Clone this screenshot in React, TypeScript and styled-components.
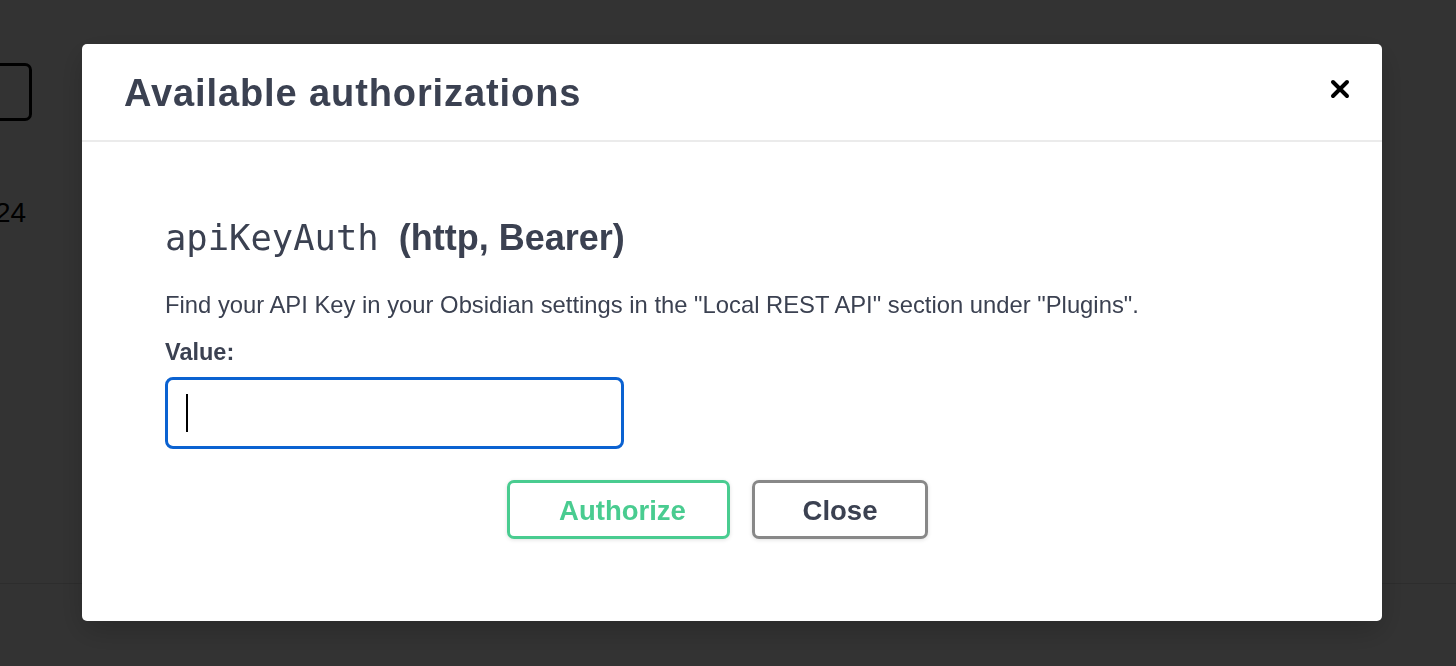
import styled, { createGlobalStyle } from "styled-components";

const GlobalStyle = createGlobalStyle`
  html, body {
    margin: 0;
    padding: 0;
    background: #ffffff;
  }
  body {
    font-family: "Liberation Sans", Arial, sans-serif;
  }
`;

const Page = styled.div`
  width: 1456px;
  height: 666px;
  overflow: hidden;
  background: #ffffff;
  display: flex;
  flex-direction: column;
`;

const PageButton = styled.div`
  width: 94px;
  height: 52px;
  margin: 63px 0 0 -68px;
  border: 3px solid #000000;
  border-radius: 7px;
`;

const PageNumber = styled.div`
  margin-top: 76px;
  margin-left: -5px;
  font-size: 28px;
  color: #000000;
  font-family: "Liberation Sans", Arial, sans-serif;
`;

const PageRule = styled.div`
  margin-top: 354px;
  border-top: 1px solid #e0e0e0;
`;

const Backdrop = styled.div`
  position: fixed;
  inset: 0;
  background: rgba(0, 0, 0, 0.8);
  display: flex;
  align-items: flex-start;
  padding: 44px 0 0 82px;
`;

const Modal = styled.div`
  width: 1300px;
  background: #ffffff;
  border-radius: 5px;
  box-shadow: 0 10px 30px rgba(0, 0, 0, 0.2);
  color: #3b4151;
`;

const Header = styled.div`
  height: 98px;
  display: flex;
  align-items: center;
  justify-content: space-between;
  padding: 0 31px 0 42px;
  border-bottom: 2px solid #ebebeb;
  box-sizing: border-box;
`;

const Title = styled.h3`
  margin: 2px 0 0;
  font-size: 38px;
  letter-spacing: 0.9px;
  font-weight: 700;
  line-height: 1;
  color: #3b4151;
`;

const CloseIcon = styled.button`
  width: 22px;
  height: 22px;
  padding: 0;
  margin-top: -6px;
  border: none;
  background: none;
  display: flex;
  align-items: center;
  justify-content: center;
`;

const Content = styled.div`
  padding: 78px 83px 82px 83px;
`;

const SchemeTitle = styled.h4`
  margin: 0;
  display: flex;
  align-items: baseline;
  gap: 20px;
  line-height: 36px;
`;

const SchemeName = styled.code`
  font-family: "DejaVu Sans Mono", "Liberation Mono", monospace;
  font-size: 35.5px;
  font-weight: 400;
  color: #3b4151;
`;

const SchemeType = styled.span`
  font-size: 36px;
  font-weight: 700;
`;

const Description = styled.p`
  margin: 35px 0 0;
  font-size: 23.8px;
  line-height: 28px;
`;

const Label = styled.label`
  display: block;
  margin-top: 19px;
  font-size: 23.5px;
  font-weight: 700;
  line-height: 28px;
`;

const Field = styled.div`
  margin-top: 11px;
  width: 459px;
  height: 72px;
  box-sizing: border-box;
  border: 3px solid #0b62d1;
  border-radius: 8px;
  display: flex;
  align-items: center;
  padding-left: 18px;
`;

const Caret = styled.span`
  width: 2px;
  height: 38px;
  background: #000000;
`;

const ButtonRow = styled.div`
  margin-top: 31px;
  display: flex;
  justify-content: center;
  gap: 22px;
  padding-right: 29px;
`;

const Button = styled.button<{ $tone: "green" | "grey" }>`
  height: 59px;
  width: ${(p) => (p.$tone === "green" ? "223px" : "176px")};
  box-sizing: border-box;
  background: #ffffff;
  border: 3px solid ${(p) => (p.$tone === "green" ? "#49cc90" : "#888888")};
  border-radius: 7px;
  box-shadow: 0 1px 4px rgba(0, 0, 0, 0.12);
  color: ${(p) => (p.$tone === "green" ? "#49cc90" : "#3b4151")};
  font-family: "Liberation Sans", Arial, sans-serif;
  font-size: 27.5px;
  font-weight: 700;
  padding: 2px 0 0 ${(p) => (p.$tone === "green" ? "8px" : "0")};
`;

export default function App() {
  return (
    <>
      <GlobalStyle />
      <Page>
        <PageButton />
        <PageNumber>24</PageNumber>
        <PageRule />
      </Page>
      <Backdrop>
        <Modal>
          <Header>
            <Title>Available authorizations</Title>
            <CloseIcon aria-label="Close">
              <svg width="20" height="20" viewBox="0 0 20 20">
                <path d="M3 3 L17 17 M17 3 L3 17" stroke="#000" strokeWidth="4" strokeLinecap="round" />
              </svg>
            </CloseIcon>
          </Header>
          <Content>
            <SchemeTitle>
              <SchemeName>apiKeyAuth</SchemeName>
              <SchemeType>(http, Bearer)</SchemeType>
            </SchemeTitle>
            <Description>
              Find your API Key in your Obsidian settings in the "Local REST API" section under "Plugins".
            </Description>
            <Label>Value:</Label>
            <Field>
              <Caret />
            </Field>
            <ButtonRow>
              <Button $tone="green">Authorize</Button>
              <Button $tone="grey">Close</Button>
            </ButtonRow>
          </Content>
        </Modal>
      </Backdrop>
    </>
  );
}
